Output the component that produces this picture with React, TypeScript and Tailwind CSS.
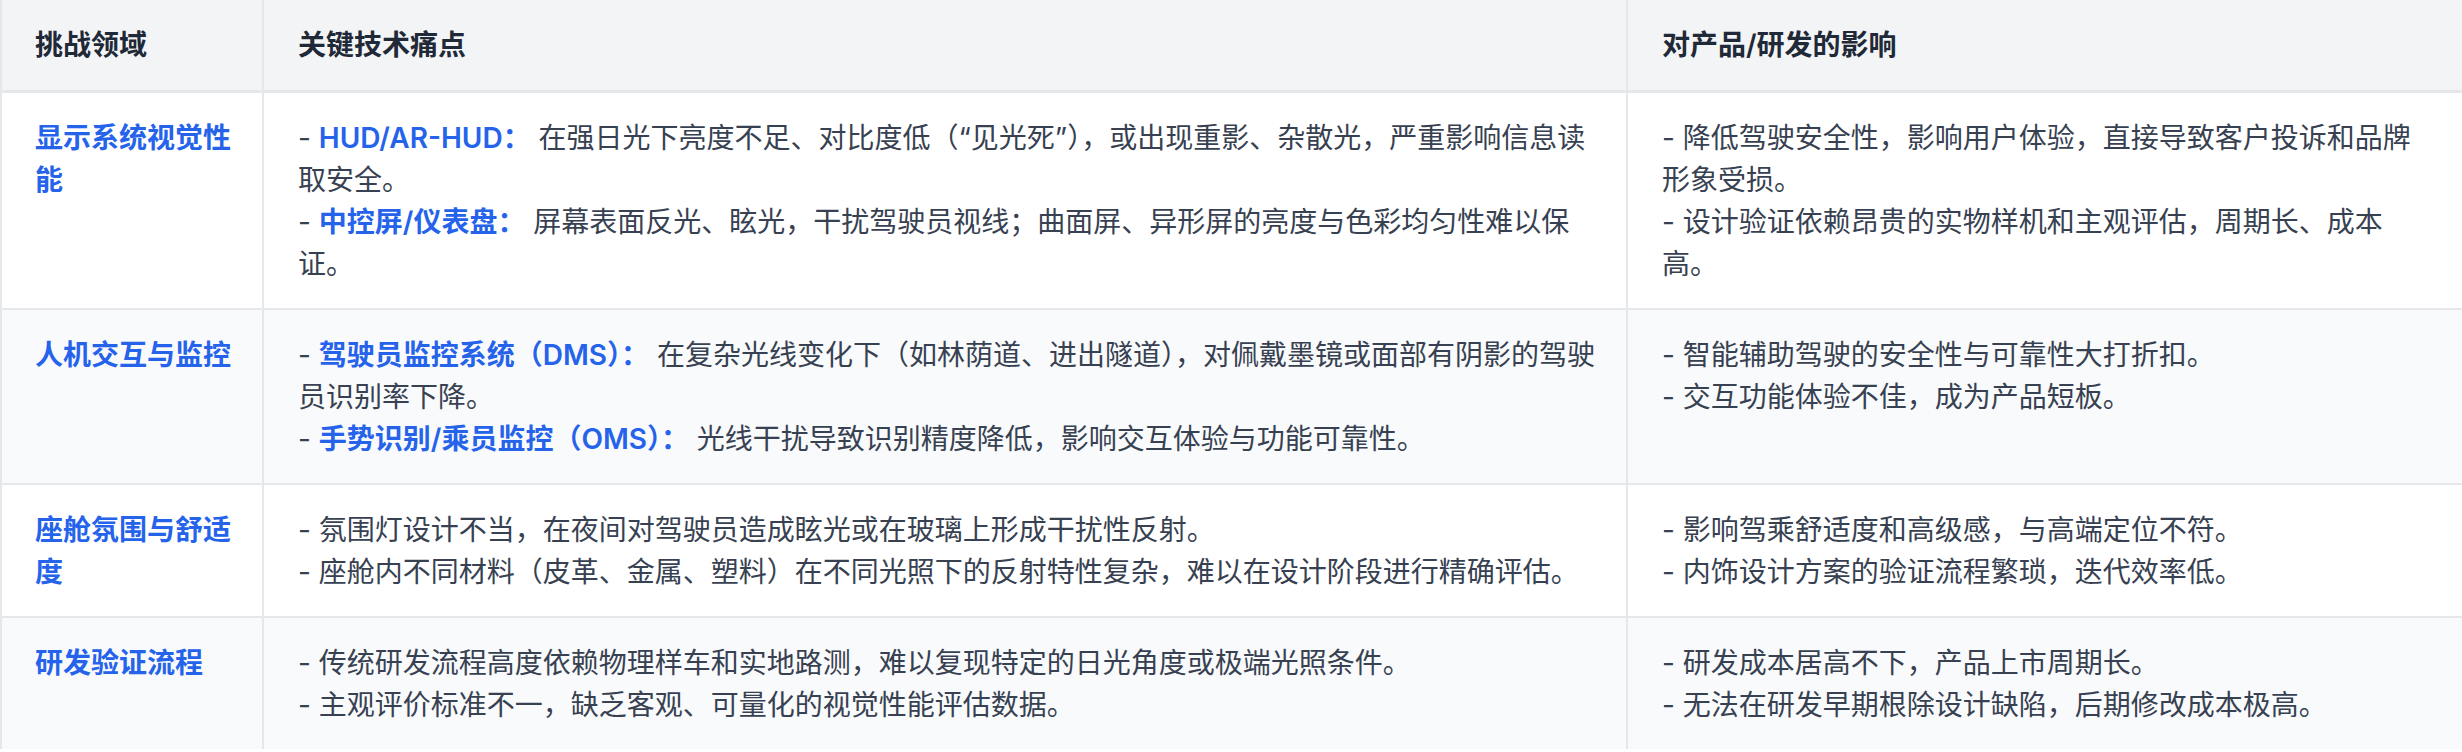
import React from 'react';

type Pain = { label?: string; text: string };
type Row = { area: string; pains: Pain[]; impacts: string[] };

const rows: Row[] = [
  {
    area: '显示系统视觉性能',
    pains: [
      {
        label: 'HUD/AR-HUD：',
        text: '在强日光下亮度不足、对比度低（“见光死”），或出现重影、杂散光，严重影响信息读取安全。',
      },
      {
        label: '中控屏/仪表盘：',
        text: '屏幕表面反光、眩光，干扰驾驶员视线；曲面屏、异形屏的亮度与色彩均匀性难以保证。',
      },
    ],
    impacts: [
      '降低驾驶安全性，影响用户体验，直接导致客户投诉和品牌形象受损。',
      '设计验证依赖昂贵的实物样机和主观评估，周期长、成本高。',
    ],
  },
  {
    area: '人机交互与监控',
    pains: [
      {
        label: '驾驶员监控系统（DMS）：',
        text: '在复杂光线变化下（如林荫道、进出隧道），对佩戴墨镜或面部有阴影的驾驶员识别率下降。',
      },
      {
        label: '手势识别/乘员监控（OMS）：',
        text: '光线干扰导致识别精度降低，影响交互体验与功能可靠性。',
      },
    ],
    impacts: ['智能辅助驾驶的安全性与可靠性大打折扣。', '交互功能体验不佳，成为产品短板。'],
  },
  {
    area: '座舱氛围与舒适度',
    pains: [
      { text: '氛围灯设计不当，在夜间对驾驶员造成眩光或在玻璃上形成干扰性反射。' },
      { text: '座舱内不同材料（皮革、金属、塑料）在不同光照下的反射特性复杂，难以在设计阶段进行精确评估。' },
    ],
    impacts: ['影响驾乘舒适度和高级感，与高端定位不符。', '内饰设计方案的验证流程繁琐，迭代效率低。'],
  },
  {
    area: '研发验证流程',
    pains: [
      { text: '传统研发流程高度依赖物理样车和实地路测，难以复现特定的日光角度或极端光照条件。' },
      { text: '主观评价标准不一，缺乏客观、可量化的视觉性能评估数据。' },
    ],
    impacts: ['研发成本居高不下，产品上市周期长。', '无法在研发早期根除设计缺陷，后期修改成本极高。'],
  },
];

export default function App() {
  return (
    <div className="min-h-screen bg-white">
      <div
        className="w-[2462px] border-l-2 border-[#e5e7eb] text-[28px] leading-[42px] text-[#374151]"
        style={{ fontFamily: '"Inter", "Noto Sans CJK SC", "Noto Sans", sans-serif' }}
      >
        <div className="grid grid-cols-[262px_1364px_1fr] border-b-[3px] border-[#e5e7eb] bg-[#f3f4f6] font-semibold text-[#1f2937]">
          <div className="border-r-2 border-[#e5e7eb] py-[24px] pl-[33px] pr-[17px]">挑战领域</div>
          <div className="border-r-2 border-[#e5e7eb] py-[24px] pl-[34px] pr-[30px]">关键技术痛点</div>
          <div className="py-[24px] pl-[34px] pr-[40px]">对产品/研发的影响</div>
        </div>
        {rows.map((row, i) => (
          <div
            key={row.area}
            className={
              'grid grid-cols-[262px_1364px_1fr] ' +
              (i % 2 === 1 ? 'bg-[#f9fafb] ' : 'bg-white ') +
              (i < rows.length - 1 ? 'border-b-2 border-[#e5e7eb]' : '')
            }
          >
            <div className="border-r-2 border-[#e5e7eb] pt-[24px] pb-[23px] pl-[33px] pr-[17px] font-semibold text-[#2563eb]">
              {row.area}
            </div>
            <div className="border-r-2 border-[#e5e7eb] pt-[24px] pb-[23px] pl-[34px] pr-[30px]">
              {row.pains.map((p, j) => (
                <p key={j}>
                  {'- '}
                  {p.label ? (
                    <>
                      <span className="font-semibold text-[#2563eb]">{p.label}</span>{' '}
                    </>
                  ) : null}
                  {p.text}
                </p>
              ))}
            </div>
            <div className="pt-[24px] pb-[23px] pl-[34px] pr-[40px]">
              {row.impacts.map((t, j) => (
                <p key={j}>{'- ' + t}</p>
              ))}
            </div>
          </div>
        ))}
      </div>
    </div>
  );
}
